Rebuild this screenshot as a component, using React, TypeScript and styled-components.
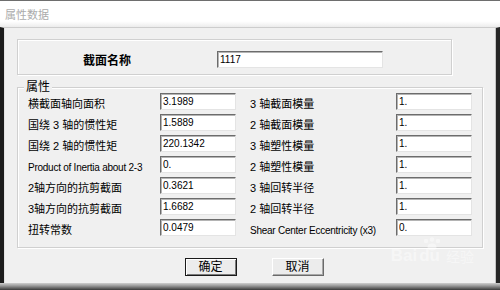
import * as React from "react";
import styled, { createGlobalStyle } from "styled-components";

const GlobalStyle = createGlobalStyle`
  html, body {
    margin: 0;
    padding: 0;
    background: #202020;
  }
  body {
    width: 500px;
    height: 290px;
    overflow: hidden;
    font-family: "Liberation Sans", "Noto Sans CJK SC", sans-serif;
  }
`;

const leftRows = [
  { label: "横截面轴向面积", value: "3.1989" },
  { label: "国绕 3 轴的惯性矩", value: "1.5889" },
  { label: "国绕 2 轴的惯性矩", value: "220.1342" },
  { label: "Product of Inertia about 2-3", value: "0.", latin: true },
  { label: "2轴方向的抗剪截面", value: "0.3621" },
  { label: "3轴方向的抗剪截面", value: "1.6682" },
  { label: "扭转常数", value: "0.0479" },
];

const rightRows = [
  { label: "3 轴截面模量", value: "1." },
  { label: "2 轴截面模量", value: "1." },
  { label: "3 轴塑性模量", value: "1." },
  { label: "2 轴塑性模量", value: "1." },
  { label: "3 轴回转半径", value: "1." },
  { label: "2 轴回转半径", value: "1." },
  { label: "Shear Center Eccentricity (x3)", value: "0.", latin: true },
];

const App = () => {
  return (
    <>
      <GlobalStyle />
      <Window>
        <TitleBar>属性数据</TitleBar>
        <Client>
          <NameGroup>
            <NameLabel>截面名称</NameLabel>
            <Field $width={166} readOnly value="1117" />
          </NameGroup>

          <PropGroup>
            <Legend>属性</Legend>
            <PropGrid>
              {leftRows.map((row, i) => (
                <React.Fragment key={row.label}>
                  <Label $latin={row.latin}>{row.label}</Label>
                  <Field $width={76} readOnly value={row.value} />
                  <Label $latin={rightRows[i].latin} $right>
                    {rightRows[i].label}
                  </Label>
                  <Field $width={76} readOnly value={rightRows[i].value} />
                </React.Fragment>
              ))}
            </PropGrid>
          </PropGroup>

          <ButtonRow>
            <Button $default>确定</Button>
            <Button>取消</Button>
          </ButtonRow>

          <Watermark>
            <svg width="22" height="14" viewBox="0 0 22 14">
              <circle cx="5" cy="4" r="2.2" fill="#fff" />
              <circle cx="11" cy="2.5" r="2.2" fill="#fff" />
              <circle cx="17" cy="4" r="2.2" fill="#fff" />
              <ellipse cx="11" cy="10" rx="4.5" ry="3.5" fill="#fff" />
            </svg>
            <span className="brand">Bai</span>
            <span className="brand">du</span>
            <span className="cn">经验</span>
          </Watermark>
        </Client>
        <BottomStrip />
      </Window>
    </>
  );
};

export default App;

const Window = styled.div`
  width: 500px;
  height: 290px;
  display: flex;
  flex-direction: column;
  background: #262626;
`;

const TitleBar = styled.div`
  box-sizing: border-box;
  height: 27px;
  border-top: 1px solid #6e6e6e;
  background: linear-gradient(#ffffff 0%, #ffffff 78%, #ececec 100%);
  display: flex;
  align-items: center;
  padding-left: 5px;
  color: #ababab;
  font-size: 11px;
`;

const Client = styled.div`
  position: relative;
  box-sizing: border-box;
  height: 256px;
  border-top: 1px solid #cdcdcd;
  border-left: 4px solid #1c1c1c;
  border-right: 4px solid #262626;
  background: #f0f0f0;
  box-shadow: inset 1px 0 0 #e2e2e2, inset -1px 0 0 #c4c4c4;
  display: flex;
  flex-direction: column;
`;

const NameGroup = styled.div`
  box-sizing: border-box;
  width: 435px;
  height: 36px;
  margin: 11px 0 0 13px;
  border: 1px solid #d0d0d0;
  box-shadow: inset 1px 1px 0 #fff, 1px 1px 0 #fff;
  display: flex;
  align-items: flex-start;
  padding: 11px 0 0 65px;
`;

const NameLabel = styled.div`
  width: 134px;
  font-size: 12px;
  font-weight: bold;
  line-height: 21px;
  color: #000;
`;

const PropGroup = styled.div`
  position: relative;
  box-sizing: border-box;
  height: 161px;
  margin: 12px 13px 0 13px;
  border: 1px solid #d0d0d0;
  box-shadow: inset 1px 1px 0 #fff, 1px 1px 0 #fff;
  padding: 5px 10px 0 10px;
`;

const Legend = styled.span`
  position: absolute;
  top: -8px;
  left: 6px;
  padding: 0 2px;
  background: #f0f0f0;
  font-size: 12px;
  line-height: 15px;
  color: #000;
`;

const PropGrid = styled.div`
  display: grid;
  grid-template-columns: 132px 76px 160px 76px;
  grid-auto-rows: 17px;
  row-gap: 4px;
`;

const Label = styled.div<{ $latin?: boolean; $right?: boolean }>`
  padding-left: ${(p) => (p.$right ? "14px" : "0")};
  font-size: ${(p) => (p.$latin ? "10px" : "11px")};
  letter-spacing: ${(p) => (p.$latin ? "-0.25px" : "0")};
  line-height: 23px;
  white-space: nowrap;
  color: #000;
`;

const Field = styled.input<{ $width: number }>`
  box-sizing: border-box;
  width: ${(p) => p.$width}px;
  height: 17px;
  margin: 0;
  padding: 0 0 0 2px;
  border: 1px solid;
  border-color: #6c6c6c #e4e4e4 #e4e4e4 #6c6c6c;
  box-shadow: inset 1px 1px 0 #b4b4b4;
  background: #fff;
  font-family: "Liberation Sans", sans-serif;
  font-size: 10px;
  color: #000;
  outline: 0;
`;

const ButtonRow = styled.div`
  display: flex;
  justify-content: center;
  gap: 35px;
  margin-top: 10px;
  padding-left: 8px;
`;

const Button = styled.button<{ $default?: boolean }>`
  box-sizing: border-box;
  width: 52px;
  height: 18px;
  margin: 0;
  padding: 0;
  font-family: "Liberation Sans", "Noto Sans CJK SC", sans-serif;
  font-size: 12px;
  line-height: 16px;
  color: #000;
  background: #ececec;
  border: 1px solid;
  border-color: ${(p) =>
    p.$default ? "#1a1a1a" : "#ffffff #6a6a6a #6a6a6a #ffffff"};
  box-shadow: ${(p) =>
    p.$default
      ? "inset 1px 1px 0 #ffffff, inset -1px -1px 0 #7a7a7a"
      : "inset -1px -1px 0 #a8a8a8"};
  appearance: none;
  outline: 0;
`;

const Watermark = styled.div`
  position: absolute;
  right: 22px;
  bottom: 18px;
  display: flex;
  align-items: flex-end;
  gap: 2px;
  opacity: 0.45;
  color: #ffffff;
  pointer-events: none;
  svg {
    position: absolute;
    left: 30px;
    top: -10px;
  }
  .brand {
    font-family: "Liberation Sans", sans-serif;
    font-size: 17px;
    font-weight: bold;
    line-height: 18px;
  }
  .cn {
    margin-left: 4px;
    font-family: "Noto Sans CJK SC", sans-serif;
    font-size: 14px;
    line-height: 17px;
  }
`;

const BottomStrip = styled.div`
  height: 7px;
  background: linear-gradient(#cfcfcf 0%, #9a9a9a 40%, #3a3a3a 100%);
`;
